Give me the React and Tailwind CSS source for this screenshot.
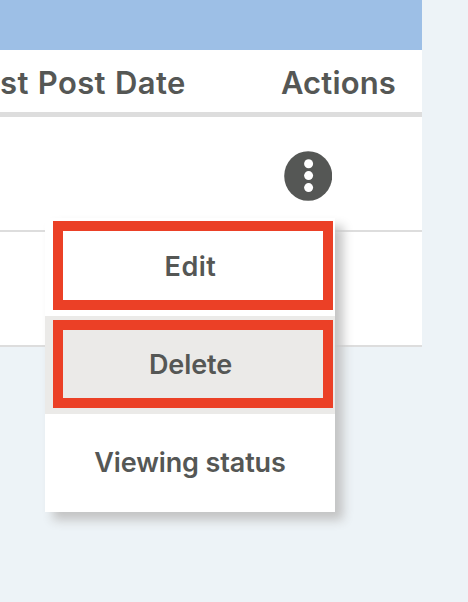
function MenuItem({ label, textClass, className = '', highlighted = false }) {
  return (
    <div className={`h-[98px] ${className}`}>
      <div
        className={`flex w-[280px] items-center justify-center border-[10px] ${
          highlighted ? 'border-[#eb4026]' : 'border-transparent'
        } ${textClass}`}
      >
        {label}
      </div>
    </div>
  );
}

export default function App() {
  return (
    <div className="relative h-[602px] w-[468px] overflow-hidden bg-[#edf3f7] font-['Inter','Liberation_Sans',sans-serif] font-semibold text-[#555755]">
      <div className="w-[422px]">
        <div className="h-[50px] bg-[#9dbfe6]" />
        <div className="flex h-[67px] items-center justify-between border-b-[5px] border-[#ddd] bg-white pt-[3px] pr-[26px] text-[31px] leading-none whitespace-nowrap">
          <span className="tracking-[0.36px] [word-spacing:1px]">st Post Date</span>
          <span className="tracking-[0.15px]">Actions</span>
        </div>
        <div className="flex h-[115px] justify-end border-b-2 border-[#ddd] bg-white pt-[34px] pr-[90px]">
          <button aria-label="Actions" className="h-[50px] w-[48px]">
            <svg viewBox="0 0 48 50" className="h-full w-full">
              <ellipse cx="24.2" cy="25" rx="24" ry="24.8" fill="#555755" />
              <circle cx="24.6" cy="12.7" r="4.5" fill="white" />
              <circle cx="24.6" cy="24.6" r="4.5" fill="white" />
              <circle cx="24.6" cy="36.6" r="4.5" fill="white" />
            </svg>
          </button>
        </div>
        <div className="h-[115px] border-b-2 border-[#ddd] bg-white" />
      </div>

      <div className="absolute top-[218px] left-[45px] w-[290px] bg-white text-[27px] leading-none whitespace-nowrap shadow-[8px_8px_10px_#c3c3c3]">
        <MenuItem label="Edit" highlighted className="pt-[3px] pl-[8px]" textClass="h-[89px] pt-px pr-[5px] tracking-[0.5px]" />
        <MenuItem label="Delete" highlighted className="bg-[#ebeae8] pt-[4px] pl-[8px]" textClass="h-[88px] pr-[5px] tracking-[-0.1px]" />
        <MenuItem label="Viewing status" className="pt-[4px] pl-[5px]" textClass="h-[88px] tracking-[-0.12px]" />
      </div>
    </div>
  );
}
